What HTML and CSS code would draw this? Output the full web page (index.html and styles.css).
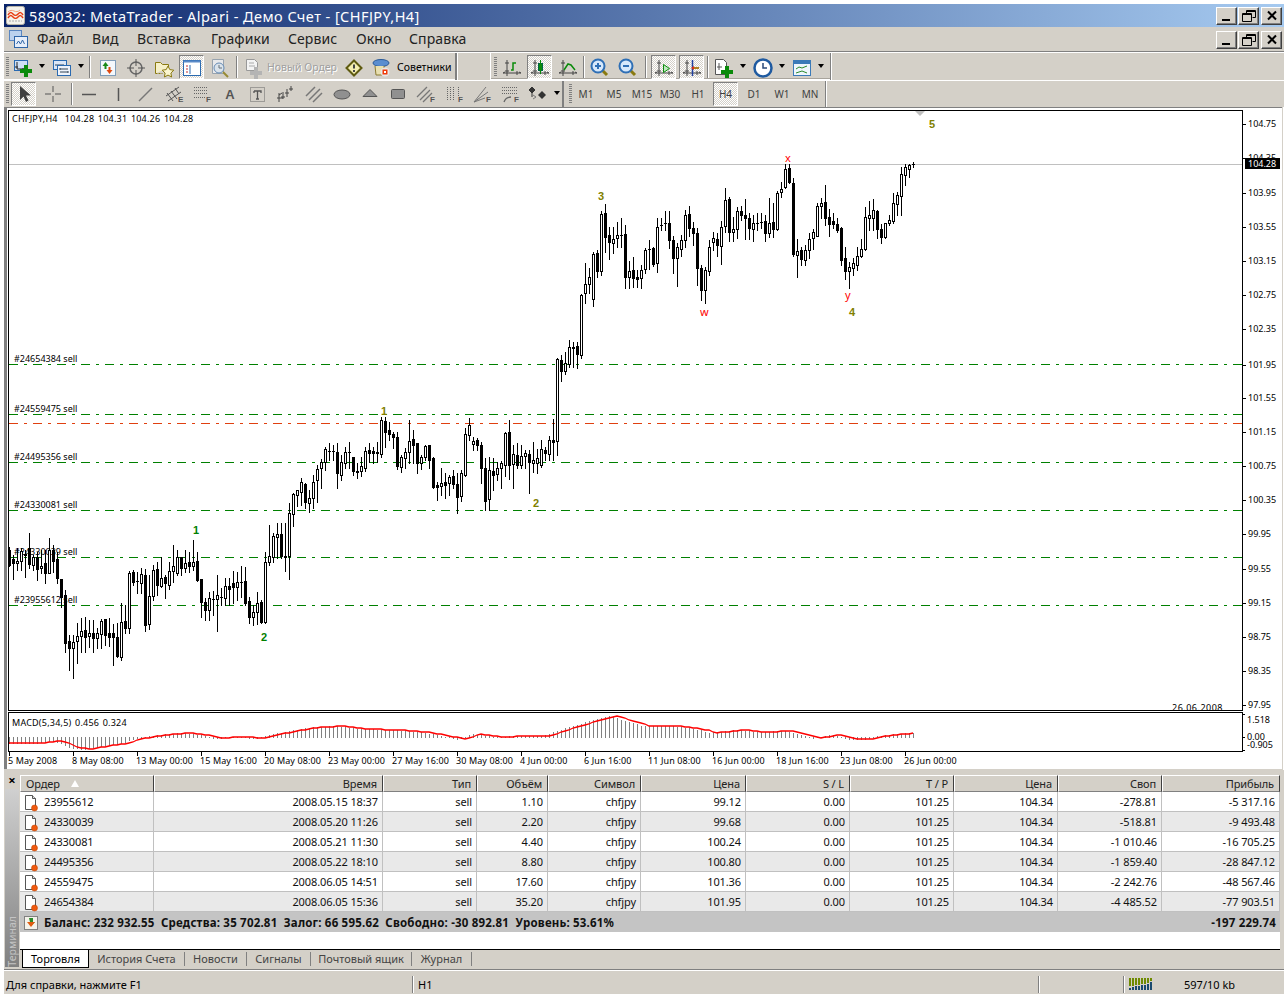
FILE: index.html
```html
<!DOCTYPE html>
<html>
<head>
	<meta charset="utf-8">
	<title>MetaTrader</title>
	<link rel="stylesheet" href="styles.css">
</head>
<body>

<svg class="defs" xmlns="http://www.w3.org/2000/svg">
	<symbol id="axes" viewBox="0 0 20 20"><path d="M5 2v16M1 15h18M15 13v4" stroke="#444" fill="none"/><path d="M3 13h4M3 5h4M1 15l2-1M19 15l-2-1" stroke="#444" fill="none"/></symbol>
	<symbol id="mag" viewBox="0 0 20 20"><path d="M11 11l6 6" stroke="#8a7a10" stroke-width="3"/><circle cx="8" cy="8" r="6.5" fill="#d6e8fb" stroke="#2f6fb5" stroke-width="2"/></symbol>
	<symbol id="win-min" viewBox="0 0 18 16"><rect x="4" y="11" width="8" height="2" fill="#000"/></symbol>
	<symbol id="win-max" viewBox="0 0 18 16"><path d="M6.500 2.500h9v7h-3M6.500 2.500v3M6.500 3.500h9" fill="none" stroke="#000"/><path d="M2.500 5.500h9v8h-9zM2.500 6.500h9" fill="none" stroke="#000"/></symbol>
	<symbol id="win-close" viewBox="0 0 18 16"><path d="M5 3.500l8 8M13 3.500l-8 8" stroke="#000" stroke-width="2"/></symbol>
	<symbol id="doc" viewBox="0 0 14 18"><path d="M1.500 1.500h7l3 3v11h-10z" fill="#fff" stroke="#555"/><path d="M8.500 1.500v3h3" fill="#ddd" stroke="#555"/><circle cx="10.500" cy="14" r="3" fill="#f05a10" stroke="#b84000" stroke-width=".5"/></symbol>
</svg>

<div class="window">

	<div class="titlebar">
		<svg class="app-icon" width="19" height="19" viewBox="0 0 19 19"><rect x=".5" y=".5" width="18" height="18" rx="2" fill="#f4f2ec" stroke="#b8b4a8"/><path d="M2 9c2-3 3-3 5-1s3 2 5 0 3-2 5 1M2 12c2-3 3-3 5-1s3 2 5 0 3-2 5 1" fill="none" stroke="#e83a10" stroke-width="1.500"/><path d="M2 6c2-2 4-2 6-1s4 1 6-1" fill="none" stroke="#f0a080"/><path d="M3 15h13" stroke="#aaa" stroke-dasharray="2 1"/></svg>
		<span class="title-text">589032: MetaTrader - Alpari - Демо Счет - [CHFJPY,H4]</span>
		<div class="winbtns">
			<span class="winbtn"><svg width="18" height="16"><use href="#win-min"/></svg></span>
			<span class="winbtn"><svg width="18" height="16"><use href="#win-max"/></svg></span>
			<span class="winbtn gap"><svg width="18" height="16"><use href="#win-close"/></svg></span>
		</div>
	</div>

	<div class="menubar">
		<svg class="menu-icon" width="19" height="19" viewBox="0 0 19 19"><rect x=".5" y=".5" width="12" height="10" fill="#bcd2ee" stroke="#5a86c0"/><rect x="5.500" y="6.500" width="13" height="11" fill="#e6eefa" stroke="#2f66a8"/><path d="M7.500 14l2-3 2 3 2-4 2 4" fill="none" stroke="#2f66a8"/></svg>
		<nav class="menu">
			<span class="m1">Файл</span><span class="m2">Вид</span><span class="m3">Вставка</span><span class="m4">Графики</span><span class="m5">Сервис</span><span class="m6">Окно</span><span class="m7">Справка</span>
		</nav>
		<div class="winbtns">
			<span class="winbtn"><svg width="18" height="16"><use href="#win-min"/></svg></span>
			<span class="winbtn"><svg width="18" height="16"><use href="#win-max"/></svg></span>
			<span class="winbtn gap"><svg width="18" height="16"><use href="#win-close"/></svg></span>
		</div>
	</div>

	<div class="tools row1">
		<div class="band b1">
			<i class="grip"></i>
			<span class="btn"><svg class="ic" viewBox="0 0 20 20"><rect x="1.500" y="2.500" width="13" height="10" fill="#cfe0f5" stroke="#2a6ab0"/><path d="M4 4v7h8M2 9h3M10 10v2" stroke="#222" fill="none"/><path d="M11 7h4v4h4v4h-4v4h-4v-4H7v-4h4z" fill="#0a8a0a"/></svg></span>
			<i class="arrow"></i>
			<span class="btn m1l"><svg class="ic" viewBox="0 0 20 20"><rect x="1.500" y="2.500" width="13" height="9" fill="#dbe7f7" stroke="#2a6ab0"/><path d="M3 7h9" stroke="#345"/><rect x="5.500" y="7.500" width="13" height="10" fill="#eef3fb" stroke="#2a6ab0"/><path d="M8 11h8M8 14h8M8 10v2M16 13v2" stroke="#345"/></svg></span>
			<i class="arrow"></i>
			<i class="sep s8"></i>
			<span class="btn"><svg class="ic" viewBox="0 0 20 20"><rect x="2.500" y="2.500" width="15" height="15" fill="#f4f8fc" stroke="#7f9db9"/><path d="M7.500 4l3 4h-2v3h-2V8h-2z" fill="#1a8a1a"/><path d="M11.500 16l-3-4h2V9h2v3h2z" fill="#e04a10"/></svg></span>
			<span class="btn"><svg class="ic" viewBox="0 0 20 20"><circle cx="10" cy="10" r="6" fill="none" stroke="#666" stroke-width="1.500"/><path d="M10 1v7M10 12v7M1 10h7M12 10h7" stroke="#555"/></svg></span>
			<span class="btn"><svg class="ic" viewBox="0 0 20 20"><path d="M1.500 15.500v-11h5l2 2h6v3" fill="#f6f0c8" stroke="#8a7a10"/><path d="M1.500 15.500h7" stroke="#8a7a10" stroke-dasharray="2 1"/><path d="M14 8l1.800 3.600 4 .6-2.900 2.800.7 4-3.600-1.900-3.600 1.900.7-4-2.900-2.800 4-.6z" fill="#fbf6d0" stroke="#8a7a10"/></svg></span>
			<span class="btn on"><svg class="ic" viewBox="0 0 20 20"><rect x="1.500" y="2.500" width="17" height="15" fill="#fff" stroke="#2a6ab0"/><rect x="1.500" y="2.500" width="17" height="2" fill="#5a8ac8"/><path d="M4 8h2M4 11h2M4 14h2" stroke="#c03030"/><path d="M8 7v9" stroke="#2a6ab0"/></svg></span>
			<span class="btn off"><svg class="ic" viewBox="0 0 20 20"><path d="M2.500 1.500h11v14h-11z" fill="#eef0f4" stroke="#8899aa"/><circle cx="9" cy="10" r="5" fill="#dce8f4" stroke="#4a7ab0"/><path d="M9 7v3h3" stroke="#4a5a6a" fill="none"/><path d="M13 14l5 5" stroke="#8a7a10" stroke-width="2"/></svg></span>
			<i class="sep s6"></i>
			<span class="btn order"><svg class="ic" viewBox="0 0 20 20"><path d="M2.500 1.500h8l3 3v8h-11z" fill="#f4f4f4" stroke="#999"/><path d="M5 5h5M5 8h6" stroke="#aaa"/><path d="M10 9h4v4h4v4h-4v4h-4v-4H6v-4h4z" fill="#b4b4b4"/></svg><b class="off-text">Новый Ордер</b></span>
			<span class="btn"><svg class="ic" viewBox="0 0 20 20"><path d="M10 2.500L17.500 10 10 17.500 2.500 10z" fill="#f4eeb0" stroke="#5e5a10" stroke-width="2"/><path d="M10 6.500v4" stroke="#444" stroke-width="2"/><path d="M10 12v2" stroke="#444" stroke-width="2"/></svg></span>
			<span class="btn"><svg class="ic" viewBox="0 0 20 20"><ellipse cx="9" cy="5" rx="8" ry="3.500" fill="#5a8ed0" stroke="#2a5a98"/><path d="M3 8l1 9h8V8" fill="#e8dfb0" stroke="#8a7a30"/><circle cx="13" cy="14" r="4.500" fill="#e8e8e8"/><rect x="10.500" y="11.500" width="5" height="5" fill="#f03a08"/><rect x="12" y="13" width="2" height="2" fill="#fff"/></svg></span>
			<span class="advisor">Советники</span>
			<i class="endline"></i>
		</div>
		<div class="band b2">
			<i class="grip"></i>
			<span class="btn"><svg class="ic" viewBox="0 0 20 20"><use href="#axes"/><path d="M9 12h2V5h3" stroke="#0a8a0a" stroke-width="1.500" fill="none"/></svg></span>
			<span class="btn on"><svg class="ic" viewBox="0 0 20 20"><use href="#axes"/><rect x="8.500" y="5.500" width="4" height="7" fill="#0a8a0a" stroke="#064"/><path d="M10.500 2v14" stroke="#0a8a0a"/></svg></span>
			<span class="btn"><svg class="ic" viewBox="0 0 20 20"><use href="#axes"/><path d="M6 12l4-6 3 1 4 5" stroke="#0a8a0a" stroke-width="1.500" fill="none"/></svg></span>
			<i class="sep s4"></i>
			<span class="btn"><svg class="ic" viewBox="0 0 20 20"><use href="#mag"/><path d="M5 8h6M8 5v6" stroke="#2f6fb5" stroke-width="2"/></svg></span>
			<span class="btn"><svg class="ic" viewBox="0 0 20 20"><use href="#mag"/><path d="M5 8h6" stroke="#2f6fb5" stroke-width="2"/></svg></span>
			<i class="sep s8"></i>
			<span class="btn on"><svg class="ic" viewBox="0 0 20 20"><use href="#axes"/><path d="M9.500 6.500l6 4-6 4z" fill="#bfe8bf" stroke="#0a8a0a"/></svg></span>
			<span class="btn on"><svg class="ic" viewBox="0 0 20 20"><use href="#axes"/><path d="M10.500 2v16" stroke="#2040a0" stroke-width="1.500"/><path d="M12 9h5v2h-5z" fill="#b08020"/><path d="M12 8v4l-3-2z" fill="#e03010"/></svg></span>
			<i class="sep s4"></i>
			<span class="btn"><svg class="ic" viewBox="0 0 20 20"><path d="M1.500 1.500h8l3 3v12h-11z" fill="#fff" stroke="#555"/><path d="M5 5v7M3 9h5" stroke="#555"/><path d="M11 8h4v4h4v4h-4v4h-4v-4H7v-4h4z" fill="#0a8a0a"/></svg></span>
			<i class="arrow"></i>
			<span class="btn m1l"><svg class="ic" viewBox="0 0 20 20"><circle cx="10" cy="10" r="8.500" fill="#fff" stroke="#1f5aa0" stroke-width="2.500"/><path d="M10 5v5h4" stroke="#2a4a7a" fill="none" stroke-width="1.500"/></svg></span>
			<i class="arrow"></i>
			<span class="btn m1l"><svg class="ic" viewBox="0 0 20 20"><rect x="1.500" y="2.500" width="17" height="15" fill="#eef6fc" stroke="#3a7ab8"/><rect x="2" y="3" width="16" height="3" fill="#3a7ab8"/><path d="M4 11l3-2 3 1 5-2M4 15l3-1 3-1 5 2" stroke="#2a8a2a" fill="none"/></svg></span>
			<i class="arrow"></i>
		</div>
	</div>

	<div class="tools row2">
		<div class="band b3">
			<i class="grip"></i>
			<span class="btn t2 on"><svg class="ic" viewBox="0 0 20 20"><path d="M6 2v14l3.500-3.500L12 18l2.500-1.500L12 11.500h5z" fill="#404040"/></svg></span>
			<span class="btn"><svg class="ic" viewBox="0 0 20 20"><path d="M10 2v6M10 12v6M2 10h6M12 10h6" stroke="#555"/></svg></span>
			<i class="sep s9"></i>
			<span class="btn"><svg class="ic" viewBox="0 0 20 20"><path d="M2 10.500h14" stroke="#555" stroke-width="1.500"/></svg></span>
			<span class="btn"><svg class="ic" viewBox="0 0 20 20"><path d="M10.500 4v13" stroke="#555" stroke-width="1.500"/></svg></span>
			<span class="btn"><svg class="ic" viewBox="0 0 20 20"><path d="M3 17L16 4" stroke="#777" stroke-width="1.500"/></svg></span>
			<span class="btn"><svg class="ic" viewBox="0 0 20 20"><path d="M2 12l13-9M4 17l13-9M3 9l6 8M7 7l6 8M11 4l4 6" stroke="#555" fill="none"/><text x="14" y="18" class="ic-letter">E</text></svg></span>
			<span class="btn"><svg class="ic" viewBox="0 0 20 20"><path d="M2 3.500h14M2 6.500h14M2 9.500h14M2 13.500h11" stroke="#666" stroke-dasharray="1 1"/><text x="14" y="18" class="ic-letter">F</text></svg></span>
			<span class="btn"><span class="ic-a">A</span></span>
			<span class="btn"><svg class="ic" viewBox="0 0 20 20"><rect x="2.500" y="3.500" width="14" height="14" fill="none" stroke="#666" stroke-dasharray="1 1"/><path d="M6 7h7v2M6 7v2M9.500 7v8M8 15h3" stroke="#555" fill="none" stroke-width="1.300"/></svg></span>
			<span class="btn"><svg class="ic" viewBox="0 0 20 20"><path d="M3 11l3-2M3 18v-9M7 15V8M5 13h4M11 13V5M9 9h4M15 7V2M13 5h4M1 14h6" stroke="#444" fill="none"/></svg></span>
			<span class="btn"><svg class="ic" viewBox="0 0 20 20"><path d="M2 12l9-9M5 16l11-11M9 18l9-9" stroke="#777" stroke-width="1.500"/></svg></span>
			<span class="btn"><svg class="ic" viewBox="0 0 20 20"><ellipse cx="10" cy="10.500" rx="8" ry="4.500" fill="#909090" stroke="#555"/></svg></span>
			<span class="btn"><svg class="ic" viewBox="0 0 20 20"><path d="M10 5.500l7 7H3z" fill="#909090" stroke="#555"/></svg></span>
			<span class="btn"><svg class="ic" viewBox="0 0 20 20"><rect x="3.500" y="5.500" width="13" height="9" rx="1" fill="#909090" stroke="#555"/></svg></span>
			<span class="btn"><svg class="ic" viewBox="0 0 20 20"><path d="M1 13L11 3M4 16L14 6M7 18L16 9" stroke="#777" stroke-width="1.300"/><text x="14" y="18" class="ic-letter">F</text></svg></span>
			<span class="btn"><svg class="ic" viewBox="0 0 20 20"><path d="M3.500 3v14M6.500 3v14M9.500 3v14M14.500 3v9" stroke="#666" stroke-dasharray="1 1"/><text x="14" y="18" class="ic-letter">F</text></svg></span>
			<span class="btn"><svg class="ic" viewBox="0 0 20 20"><path d="M2 18L14 3M2 18l14-10M2 18l11-4" stroke="#777"/><text x="14" y="18" class="ic-letter">F</text></svg></span>
			<span class="btn"><svg class="ic" viewBox="0 0 20 20"><path d="M2 3.500h15M2 6.500h15M2 9.500h15" stroke="#666" stroke-dasharray="1 1"/><path d="M4 18c1-3 3-5 7-5" stroke="#666" fill="none" stroke-width="1.300"/><text x="14" y="18" class="ic-letter">F</text></svg></span>
			<span class="btn"><svg class="ic" viewBox="0 0 20 20"><path d="M4 3l3 3-3 3-3-3zM4 7v6" fill="#333" stroke="#333"/><path d="M14 7l4 4-4 4-4-4z" fill="#333"/><path d="M5 11l3 2-3 2" fill="none" stroke="#777"/></svg></span>
			<i class="arrow"></i>
		</div>
		<div class="band b4">
			<i class="grip"></i>
			<span class="btn tf">M1</span><span class="btn tf">M5</span><span class="btn tf">M15</span><span class="btn tf">M30</span><span class="btn tf">H1</span><span class="btn tf on">H4</span><span class="btn tf">D1</span><span class="btn tf">W1</span><span class="btn tf">MN</span>
		</div>
	</div>

	<div class="chart-wrap">
		<svg id="chart" width="1280" height="663" viewBox="4 107 1280 663" xmlns="http://www.w3.org/2000/svg"></svg>
	</div>

	<div class="terminal">
		<div class="strip">
			<span class="strip-x">×</span>
			<div class="strip-bar"><span>Терминал</span></div>
		</div>
		<div class="term-main">
			<table class="orders">
				<colgroup><col class="c1"><col class="c2"><col class="c3"><col class="c4"><col class="c5"><col class="c6"><col class="c7"><col class="c7"><col class="c7"><col class="c7"><col class="c8"></colgroup>
				<thead>
					<tr><th class="first">Ордер<i class="sort"></i></th><th>Время</th><th>Тип</th><th>Объём</th><th>Символ</th><th>Цена</th><th>S / L</th><th>T / P</th><th>Цена</th><th>Своп</th><th>Прибыль</th></tr>
				</thead>
				<tbody>
					<tr><td class="first"><svg width="14" height="18"><use href="#doc"/></svg>23955612</td><td>2008.05.15 18:37</td><td>sell</td><td>1.10</td><td>chfjpy</td><td>99.12</td><td>0.00</td><td>101.25</td><td>104.34</td><td>-278.81</td><td>-5 317.16</td></tr>
					<tr><td class="first"><svg width="14" height="18"><use href="#doc"/></svg>24330039</td><td>2008.05.20 11:26</td><td>sell</td><td>2.20</td><td>chfjpy</td><td>99.68</td><td>0.00</td><td>101.25</td><td>104.34</td><td>-518.81</td><td>-9 493.48</td></tr>
					<tr><td class="first"><svg width="14" height="18"><use href="#doc"/></svg>24330081</td><td>2008.05.21 11:30</td><td>sell</td><td>4.40</td><td>chfjpy</td><td>100.24</td><td>0.00</td><td>101.25</td><td>104.34</td><td>-1 010.46</td><td>-16 705.25</td></tr>
					<tr><td class="first"><svg width="14" height="18"><use href="#doc"/></svg>24495356</td><td>2008.05.22 18:10</td><td>sell</td><td>8.80</td><td>chfjpy</td><td>100.80</td><td>0.00</td><td>101.25</td><td>104.34</td><td>-1 859.40</td><td>-28 847.12</td></tr>
					<tr><td class="first"><svg width="14" height="18"><use href="#doc"/></svg>24559475</td><td>2008.06.05 14:51</td><td>sell</td><td>17.60</td><td>chfjpy</td><td>101.36</td><td>0.00</td><td>101.25</td><td>104.34</td><td>-2 242.76</td><td>-48 567.46</td></tr>
					<tr><td class="first"><svg width="14" height="18"><use href="#doc"/></svg>24654384</td><td>2008.06.05 15:36</td><td>sell</td><td>35.20</td><td>chfjpy</td><td>101.95</td><td>0.00</td><td>101.25</td><td>104.34</td><td>-4 485.52</td><td>-77 903.51</td></tr>
					<tr class="summary">
						<td colspan="10" class="first"><svg width="14" height="14" viewBox="0 0 14 14"><rect x=".5" y=".5" width="13" height="13" fill="#f4f2ea" stroke="#808080"/><path d="M5 2h4v4h2l-4 4z" fill="#2a8a2a"/><path d="M3 6h8l-4 5z" fill="#e05a10"/></svg>Баланс: 232 932.55&nbsp; Средства: 35 702.81&nbsp; Залог: 66 595.62&nbsp; Свободно: -30 892.81&nbsp; Уровень: 53.61%</td>
						<td>-197 229.74</td>
					</tr>
				</tbody>
			</table>
			<div class="blank"></div>
			<div class="tabs">
				<span class="tab active">Торговля</span><span class="tab">История Счета</span><span class="tab">Новости</span><span class="tab">Сигналы</span><span class="tab">Почтовый ящик</span><span class="tab">Журнал</span>
			</div>
		</div>
	</div>

	<div class="status">
		<span class="st-help">Для справки, нажмите F1</span>
		<span class="st-cell st-profile">H1</span>
		<span class="st-cell st-gap"></span>
		<span class="st-cell st-conn">
			<svg width="24" height="12" viewBox="0 0 24 12">
				<path d="M1 0v8M4 0v8M7 0v7M10 0v7M13 0v6M16 0v6M19 0v5M22 0v3" stroke="#6e8a00" stroke-width="2"/>
				<path d="M1 10v2M4 9v3M7 8v4M10 8v4M13 7v5M16 7v5M19 6v6M22 4v8" stroke="#1a4a70" stroke-width="2"/>
			</svg>
			<span class="st-kb">597/10 kb</span>
		</span>
	</div>
</div>

<script src="chart.js"></script>
</body>
</html>
```

FILE: styles.css
```css
html, body {
	margin: 0;
	padding: 0;
	background: #fff;
}
body {
	font-family: "Noto Sans", sans-serif;
	font-size: 11px;
	color: #000;
}
.defs {
	display: none;
}
.window {
	margin: 4px 4px 0 4px;
	width: 1280px;
	height: 991px;
	display: flex;
	flex-direction: column;
	background: #d4d0c8;
}

/* title + menu */
.titlebar {
	height: 23px;
	display: flex;
	align-items: center;
	background: linear-gradient(90deg, #0a246a, #a6caf0);
	color: #fff;
	padding-left: 2px;
}
.app-icon {
	margin-right: 4px;
}
.title-text {
	font-size: 14.500px;
	letter-spacing: 0.45px;
	white-space: nowrap;
}
.winbtns {
	margin-left: auto;
	display: flex;
	padding-right: 2px;
}
.winbtn {
	box-sizing: border-box;
	width: 21px;
	height: 18px;
	margin-left: 1px;
	background: #d4d0c8;
	border: 1px solid;
	border-color: #fff #404040 #404040 #fff;
	box-shadow: inset -1px -1px #808080;
	display: flex;
	align-items: center;
	justify-content: center;
}
.winbtn.gap {
	margin-left: 2px;
}
.menubar {
	height: 25px;
	display: flex;
	align-items: center;
	padding-left: 5px;
	box-sizing: border-box;
	font-size: 14px;
	letter-spacing: 0.1px;
	color: #222;
}
.menu {
	display: flex;
	margin-left: 9px;
	margin-top: -2px;
}
.menu span {
	white-space: nowrap;
}
.m1 { width: 55px; }
.m2 { width: 45px; }
.m3 { width: 74px; }
.m4 { width: 77px; }
.m5 { width: 68px; }
.m6 { width: 53px; }

/* toolbars */
.tools {
	display: flex;
	box-sizing: border-box;
	border-top: 1px solid #fff;
}
.row1 {
	height: 28px;
	box-shadow: 0 -1px #808080;
}
.row1 .ic {
	margin-top: 2px;
}
.row2 {
	height: 27px;
	border-top: 1px solid #fff;
}
.band {
	display: flex;
	align-items: center;
	box-sizing: border-box;
	height: 100%;
	box-shadow: inset -1px 0 #fff, inset 0 -1px #fff;
}
.b1 {
	width: 454px;
}
.b2 {
	width: 341px;
	margin-left: 32px;
	padding-left: 3px;
	border-left: 1px solid #fff;
	box-shadow: inset -1px 0 #808080, 1px 0 #fff, inset 0 -1px #fff, inset 0 -2px #a8a49c;
}
.b3 {
	width: 560px;
	box-shadow: inset -2px 0 #808080;
}
.b4 {
	width: 261px;
	margin-left: 2px;
	box-shadow: inset -1px 0 #fff, inset -2px 0 #808080;
}
.grip {
	width: 3px;
	height: 20px;
	margin-left: 2px;
	flex: none;
	background: repeating-linear-gradient(#808080 0 1px, transparent 1px 2px);
}
.b2 .grip {
	margin-left: 0;
	margin-right: 1px;
}
.b4 .grip {
	margin-left: 3px;
}
.btn {
	box-sizing: border-box;
	flex: none;
	width: 28px;
	height: 24px;
	display: flex;
	align-items: center;
	justify-content: center;
}
.btn.on {
	width: 25px;
	margin: 0 2px 0 1px;
	background: repeating-conic-gradient(#fff 0 25%, #d4d0c8 0 50%) 0 0 / 2px 2px;
	border: 1px solid;
	border-color: #808080 #fff #fff #808080;
}
.btn.t2 {
	margin-left: 2px;
	margin-right: 3px;
}
.btn.order {
	width: 98px;
	justify-content: flex-start;
	padding-left: 4px;
	margin-right: 2px;
}
.off-text {
	font-weight: normal;
	color: #a0a0a0;
	font-size: 10.500px;
	margin-left: 3px;
	white-space: nowrap;
	text-shadow: 1px 1px #fff;
}
.off {
	opacity: 0.8;
}
.ic {
	width: 20px;
	height: 20px;
	flex: none;
	overflow: visible;
}
.ic-letter {
	font: bold 8px "Liberation Sans", sans-serif;
	fill: #555;
}
.ic-a {
	font: bold 13px "Liberation Sans", sans-serif;
	color: #555;
}
.m1l {
	margin-left: 1px;
}
.arrow {
	flex: none;
	width: 10px;
	height: 6px;
	display: flex;
	justify-content: center;
}
.arrow::before {
	content: "";
	width: 0;
	height: 0;
	border: 3.500px solid transparent;
	border-top: 4px solid #000;
	border-bottom: 0;
}
.sep {
	flex: none;
	display: flex;
	justify-content: center;
}
.sep::before {
	content: "";
	width: 1px;
	height: 22px;
	background: #808080;
	border-right: 1px solid #fff;
}
.s4 { width: 4px; }
.s6 { width: 6px; }
.s8 { width: 8px; }
.s9 { width: 9px; }
.advisor {
	margin-left: 1px;
	font-size: 10.500px;
	white-space: nowrap;
	width: 60px;
}
.endline {
	width: 2px;
	height: 100%;
	background: #808080;
	border-right: 1px solid #fff;
	margin-left: -1px;
	flex: none;
}
.tf {
	font-size: 10px;
	color: #404040;
}

/* chart */
.chart-wrap {
	height: 663px;
	background: #fff;
}
#chart {
	display: block;
}
#chart text {
	font-family: "Noto Sans", sans-serif;
	font-size: 9px;
}
#chart .head {
	letter-spacing: 0.22px;
	word-spacing: 1px;
}
#chart .wide {
	letter-spacing: 0.5px;
}
#chart .date {
	letter-spacing: 0.1px;
}
#chart .wave {
	font-family: "Liberation Sans", sans-serif;
	font-weight: bold;
	font-size: 11px;
}
#chart .mark {
	font-size: 11px;
}

/* terminal */
.terminal {
	height: 200px;
	display: flex;
}
.strip {
	width: 16px;
	display: flex;
	flex-direction: column;
}
.strip-x {
	height: 18px;
	line-height: 18px;
	text-align: center;
	font-weight: bold;
	font-size: 13px;
	margin-top: 1px;
}
.strip-bar {
	flex: 1;
	margin: 0 1px 3px 1px;
	background: linear-gradient(#d0d0d0, #808080);
	display: flex;
	flex-direction: column;
	justify-content: flex-end;
	align-items: center;
	overflow: hidden;
}
.strip-bar span {
	writing-mode: vertical-rl;
	transform: rotate(180deg);
	color: #c4c4c4;
	font-size: 10.500px;
}
.term-main {
	flex: 1;
	display: flex;
	flex-direction: column;
	padding-top: 5px;
	padding-right: 4px;
	min-width: 0;
}
.orders {
	table-layout: fixed;
	width: 1260px;
	border-collapse: separate;
	border-spacing: 0;
	background: #fff;
	letter-spacing: -0.1px;
}
.c1 { width: 134px; }
.c2 { width: 229px; }
.c3 { width: 94px; }
.c4 { width: 71px; }
.c5 { width: 93px; }
.c6 { width: 105px; }
.c7 { width: 104px; }
.c8 { width: 118px; }
.orders th {
	height: 17px;
	box-sizing: border-box;
	padding: 0 5px 0 0;
	font-weight: normal;
	text-align: right;
	background: #d4d0c8;
	color: #222;
	border: 1px solid;
	border-color: #fff #404040 #808080 #fff;
	white-space: nowrap;
}
.orders th.first {
	text-align: left;
	padding-left: 5px;
}
.sort {
	display: inline-block;
	width: 0;
	height: 0;
	margin-left: 11px;
	border: 4px solid transparent;
	border-top: 0;
	border-bottom: 7px solid #fff;
	vertical-align: 1px;
}
.orders td {
	height: 20px;
	box-sizing: border-box;
	padding: 0 4px 0 0;
	text-align: right;
	border-right: 1px solid #c0c0c0;
	border-bottom: 1px solid #c0c0c0;
	white-space: nowrap;
	color: #111;
}
.orders tbody tr:nth-child(even) td {
	background: #e9e9e9;
}
.orders td.first {
	text-align: left;
	padding-left: 4px;
}
.orders td.first svg {
	vertical-align: middle;
	margin: -4px 6px -4px 0;
}
.orders tr.summary td {
	background: #c4c4c4;
	font-weight: bold;
	font-size: 11.500px;
	letter-spacing: 0.2px;
	border: 0;
}
.blank {
	flex: 1;
	background: #fff;
}
.tabs {
	display: grid;
	grid-template-columns: 67px 96px 62px 64px 101px 60px;
	height: 21px;
	border-top: 1px solid #000;
	padding-left: 2px;
	box-sizing: border-box;
	color: #444;
}
.tab {
	height: 14px;
	margin-top: 2px;
	line-height: 14px;
	text-align: center;
	border-right: 1px solid #808080;
	white-space: nowrap;
}
.tab.active {
	height: 18px;
	margin-top: 0;
	line-height: 17px;
	background: #fff;
	color: #000;
	border-left: 1px solid #000;
	border-right: 1px solid #000;
	border-bottom: 1px solid #000;
	box-sizing: border-box;
}

/* status bar */
.status {
	height: 25px;
	display: flex;
	align-items: center;
	box-sizing: border-box;
	padding-top: 3px;
	border-top: 1px solid #fff;
	border-bottom: 1px solid #fff;
	box-shadow: 0 -1px #808080;
}
.st-help {
	width: 408px;
	padding-left: 2px;
	box-sizing: border-box;
}
.st-cell {
	height: 17px;
	display: flex;
	align-items: center;
	box-sizing: border-box;
	border-left: 1px solid #808080;
	box-shadow: inset 1px 0 #fff;
	padding-left: 5px;
}
.st-profile { width: 626px; }
.st-gap { width: 85px; }
.st-conn { flex: 1; }
.st-kb {
	margin-left: 31px;
}
```

FILE: chart.js
```js
// x of candle i is 9 + 4*i, everything is in screen pixels
// high, body top, body bottom, low, filled
var candles = [
[547,550,565,566,1],[555,559,563,579,1],[548,561,563,570,0],[548,551,561,570,0],[550,554,555,577,1],[533,548,564,568,1],[555,557,565,570,0],[552,557,569,580,1],
[550,566,568,573,0],[550,563,573,583,1],[538,550,573,573,0],[545,550,561,572,1],[552,559,578,583,1],[579,579,597,607,1],[590,595,643,652,1],[635,641,648,670,1],
[635,642,648,678,0],[623,636,641,663,0],[618,631,636,652,0],[617,630,637,652,1],[620,633,636,647,0],[620,633,638,652,1],[628,633,638,648,0],[619,621,634,648,0],
[619,619,635,645,1],[618,633,637,646,1],[624,633,637,665,1],[623,637,656,657,1],[603,622,657,660,0],[605,621,628,633,1],[571,573,628,633,0],[570,572,582,585,1],
[572,581,581,593,0],[568,574,583,593,0],[569,575,625,631,1],[575,596,624,629,0],[565,570,596,600,0],[562,569,585,595,1],[557,578,586,587,0],[575,577,583,598,1],
[562,571,585,589,0],[545,566,571,582,0],[550,557,573,575,0],[557,557,568,575,1],[550,563,568,572,0],[552,562,566,572,1],[540,562,566,570,0],[552,561,580,581,1],
[579,579,602,617,1],[598,602,610,620,1],[592,598,610,620,0],[591,599,599,615,0],[575,595,599,631,0],[588,597,597,605,0],[578,586,598,605,0],[578,586,589,605,1],
[571,583,587,603,1],[572,582,587,600,0],[566,582,582,597,0],[567,581,603,605,1],[597,601,617,623,1],[605,612,617,625,0],[592,603,612,624,0],[600,602,622,623,1],
[552,562,622,623,0],[525,556,562,565,0],[533,536,557,562,0],[523,534,537,558,0],[523,534,556,558,1],[523,556,557,571,1],[503,513,556,579,0],[493,494,514,526,0],
[490,490,495,506,0],[478,482,492,505,0],[483,484,502,508,1],[490,498,503,512,0],[475,482,498,508,0],[465,469,480,502,0],[459,462,468,488,0],[447,449,462,470,0],
[443,451,451,460,0],[445,451,451,460,0],[443,452,473,488,1],[455,462,475,480,0],[447,452,463,468,0],[442,452,452,468,0],[457,457,471,475,1],[463,471,472,478,1],
[457,466,471,476,0],[447,451,468,471,0],[443,450,453,462,1],[447,451,453,463,1],[442,452,453,462,1],[417,420,454,457,0],[417,421,432,447,1],[422,430,434,440,1],
[432,434,437,448,1],[432,437,466,469,1],[455,457,467,472,0],[448,452,458,468,0],[420,441,452,463,0],[430,439,445,463,1],[443,443,463,473,1],[455,457,463,469,0],
[445,446,457,460,0],[445,445,460,468,1],[457,458,487,488,1],[482,485,487,500,1],[468,483,486,495,0],[473,482,485,498,1],[475,477,483,495,0],[470,476,484,488,1],
[473,484,497,513,1],[470,473,496,501,0],[428,434,475,476,0],[418,425,435,440,0],[437,441,444,450,0],[438,440,445,450,1],[442,445,468,483,1],[458,468,501,510,1],
[457,470,499,510,0],[458,471,475,490,1],[462,468,474,480,0],[461,463,468,488,0],[432,433,465,476,0],[420,432,465,479,1],[445,454,464,488,0],[443,455,465,468,1],
[445,456,465,468,0],[450,453,456,468,0],[450,454,462,493,1],[442,460,463,472,0],[449,458,463,473,0],[440,449,465,467,0],[447,450,453,460,1],[436,440,454,460,0],
[419,440,442,460,1],[358,359,441,455,0],[355,360,371,381,1],[352,363,371,374,0],[340,347,364,367,0],[342,347,348,367,1],[342,346,354,368,1],[294,295,355,358,0],
[263,284,293,303,0],[268,277,284,293,0],[252,254,299,306,0],[250,253,271,277,1],[211,214,271,275,0],[204,213,237,252,1],[227,235,242,259,1],[227,239,243,253,0],
[222,235,238,247,0],[218,235,235,247,0],[225,234,277,288,1],[261,271,277,288,0],[257,270,278,287,1],[270,277,279,287,1],[265,270,278,288,0],[248,250,269,273,0],
[240,249,249,269,0],[247,248,264,266,1],[218,227,263,272,0],[218,225,225,230,0],[211,223,223,230,0],[211,223,240,248,1],[236,240,258,273,1],[243,247,258,286,0],
[235,240,249,256,0],[210,215,240,247,0],[206,214,228,236,1],[222,228,233,245,1],[228,233,268,285,1],[265,268,290,300,1],[267,270,290,303,0],[240,247,271,275,0],
[232,238,242,250,0],[233,239,245,256,1],[221,227,246,264,0],[188,200,226,232,0],[197,199,232,241,1],[217,229,232,241,0],[207,211,229,238,0],[206,211,215,220,1],
[199,215,218,239,1],[213,218,228,239,1],[215,223,229,241,0],[213,223,223,230,0],[213,222,222,228,0],[215,221,233,241,1],[198,223,233,237,0],[203,222,229,237,1],
[191,193,229,230,0],[182,189,192,197,0],[164,169,187,188,0],[164,168,182,183,1],[178,183,254,256,1],[239,251,255,277,0],[247,250,259,265,1],[245,250,260,265,0],
[233,239,250,258,0],[229,232,238,249,0],[203,206,236,236,0],[198,203,206,218,0],[185,202,218,225,1],[209,217,224,236,1],[213,221,224,228,1],[218,224,230,232,1],
[227,228,260,265,1],[247,258,271,279,1],[262,267,271,288,0],[258,263,268,275,0],[247,256,265,270,0],[239,249,256,257,0],[207,217,249,250,0],[201,215,218,230,0],
[199,210,218,230,0],[210,211,229,238,1],[224,229,237,243,1],[223,223,237,238,0],[215,220,223,225,0],[193,203,221,223,0],[192,195,204,215,0],[167,174,196,215,0],
[164,167,175,185,0],[164,165,169,177,0],[162,164,164,167,0]
];

var macd = [[9,743],[40,743],[60,741],[70,743],[80,748],[93,749],[113,745],[130,743],[140,739],[153,737],[173,734],[193,733],[207,735],[220,738],[240,737],[267,738],[280,734],[293,732],[313,728],[340,726],[353,727],[367,729],[400,730],[428,732],[465,739],[481,734],[502,737],[527,736],[551,736],[576,727],[617,716],[650,726],[679,726],[708,730],[716,733],[745,730],[765,732],[794,731],[819,738],[840,735],[856,739],[872,739],[885,736],[914,733]];

var prices = ["104.75",123,"104.35",157,"103.95",192,"103.55",226,"103.15",260,"102.75",294,"102.35",328,"101.95",364,"101.55",397,"101.15",431,"100.75",465,"100.35",499,"99.95",533,"99.55",568,"99.15",602,"98.75",636,"98.35",670,"97.95",704];
var dates = ["5 May 2008","8 May 08:00","13 May 00:00","15 May 16:00","20 May 08:00","23 May 00:00","27 May 16:00","30 May 08:00","4 Jun 00:00","6 Jun 16:00","11 Jun 08:00","16 Jun 00:00","18 Jun 16:00","23 Jun 08:00","26 Jun 00:00"];
var orders = [[364,"#24654384 sell"],[414,"#24559475 sell"],[462,"#24495356 sell"],[510,"#24330081 sell"],[557,"#24330039 sell"],[605,"#23955612 sell"]];
var waves = [["1",381,415,"#808000"],["2",533,507,"#808000"],["3",598,200,"#808000"],["4",849,316,"#808000"],["5",929,128,"#808000"],["1",193,534,"#008000"],["2",261,641,"#008000"]];
var marks = [["x",785,162],["w",700,316],["y",845,299]];

var out = [];
function rect(x, y, w, h, fill) {
	out.push('<rect x="'+x+'" y="'+y+'" width="'+w+'" height="'+h+'" fill="'+fill+'" shape-rendering="crispEdges"/>');
}
function text(x, y, s, fill, cls) {
	out.push('<text x="'+x+'" y="'+y+'" fill="'+(fill||'#000')+'"'+(cls ? ' class="'+cls+'"' : '')+'>'+s+'</text>');
}
function macdAt(x) {
	for (var i = 1; i < macd.length; i++) {
		if (x <= macd[i][0]) {
			var a = macd[i-1], b = macd[i];
			return a[1] + (b[1]-a[1])*(x-a[0])/(b[0]-a[0]);
		}
	}
	return macd[macd.length-1][1];
}

// window edges
rect(4, 107, 1279, 1, '#808080');
rect(4, 107, 3, 663, '#808080');
rect(1282, 107, 1, 663, '#d4d0c8');
rect(4, 769, 1279, 1, '#d4d0c8');

// order lines
orders.forEach(function(o) {
	out.push('<path d="M9 '+(o[0]+0.5)+'H1242" stroke="#008000" stroke-dasharray="9 6 3 6" fill="none"/>');
	text(14, o[0]-2, o[1]);
});
out.push('<path d="M9 423.5H1242" stroke="#e04010" stroke-dasharray="9 6 3 6" fill="none"/>');
rect(9, 164, 1233, 1, '#c0c0c0');

// candles
candles.forEach(function(c, i) {
	var x = 9 + 4*i;
	rect(x, c[0], 1, c[3]-c[0]+1, '#000');
	rect(x-1, c[1], 3, c[2]-c[1]+1, '#000');
	if (!c[4] && c[2]-c[1] > 1) rect(x, c[1]+1, 1, c[2]-c[1]-1, '#fff');
});

// wave marks
waves.forEach(function(w) { text(w[1], w[2], w[0], w[3], 'wave'); });
marks.forEach(function(m) { text(m[1], m[2], m[0], '#f00', 'mark'); });
out.push('<path d="M915 111h10l-5 5z" fill="#c0c0c0"/>');

text(12, 122, 'CHFJPY,H4&#160;&#160;104.28 104.31 104.26 104.28', '#000', 'head');
text(1172, 711, '26.06.2008', '#000', 'wide');

// frames
function frame(x1, y1, x2, y2) {
	rect(x1, y1, x2-x1+1, 1, '#000');
	rect(x1, y2, x2-x1+1, 1, '#000');
	rect(x1, y1, 1, y2-y1+1, '#000');
	rect(x2, y1, 1, y2-y1+1, '#000');
}
frame(8, 110, 1242, 710);
frame(8, 712, 1242, 751);

// price scale
for (var p = 0; p < prices.length; p += 2) {
	rect(1243, prices[p+1]+1, 3, 1, '#000');
	text(1248, prices[p+1]+4, prices[p]);
}
rect(1245, 158, 35, 11, '#000');
text(1248, 167, '104.28', '#fff');

// macd window: histogram bars grow from the zero line
var zero = 737;
for (var b = 0; b < candles.length; b++) {
	var bx = 9 + 4*b;
	var v = Math.round(macdAt(bx + 8));
	rect(bx, Math.min(v, zero), 1, Math.abs(v - zero) + 1, '#808080');
}
var pts = [];
for (var k = 9; k <= 914; k += 4) pts.push(k + ',' + Math.round(macdAt(k)));
out.push('<polyline points="'+pts.join(' ')+'" fill="none" stroke="#f00" stroke-width="1.3"/>');
text(12, 726, 'MACD(5,34,5) 0.456 0.324', '#000', 'head');
rect(1243, 714, 2, 1, '#000');
rect(1243, 737, 2, 1, '#000');
rect(1243, 750, 2, 1, '#000');
text(1247, 723, '1.518');
text(1247, 740, '0.00');
text(1247, 748, '-0.905');

// time scale
dates.forEach(function(d, i) {
	rect(9 + 64*i, 751, 1, 5, '#000');
	text(i ? 8 + 64*i : 8, 764, d, '#000', 'date');
});

document.getElementById('chart').innerHTML = out.join('');
```
